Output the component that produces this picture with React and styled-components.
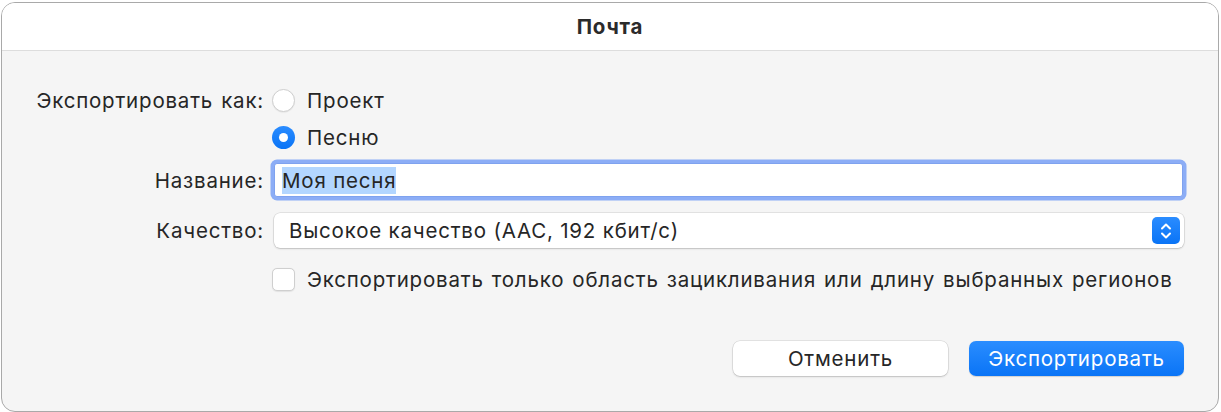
import React from 'react';
import styled, { createGlobalStyle } from 'styled-components';

const GlobalStyle = createGlobalStyle`
  html, body {
    margin: 0;
    padding: 0;
    background: #ffffff;
  }
  body {
    font-family: Inter, "Liberation Sans", Arial, sans-serif;
    color: #262626;
    letter-spacing: 0.8px;
    word-spacing: 1.5px;
  }
`;

const Window = styled.div`
  box-sizing: border-box;
  width: 1218px;
  height: 410px;
  margin: 2px 0 0 1px;
  border: 1px solid #a9a9a9;
  border-radius: 14px;
  background: #f5f5f5;
  overflow: hidden;
  display: flex;
  flex-direction: column;
`;

const TitleBar = styled.div`
  height: 47px;
  flex: none;
  background: #ffffff;
  border-bottom: 1px solid #dddddd;
  display: flex;
  align-items: center;
  justify-content: center;
  font-size: 20.5px;
  font-weight: 700;
  color: #2b2b2b;
`;

const Body = styled.div`
  flex: 1;
  display: flex;
  flex-direction: column;
  padding: 34px 34px 0 0;
`;

const Form = styled.div`
  display: grid;
  grid-template-columns: 262px 1fr;
  column-gap: 8px;
  grid-template-rows: 30px 30px 42px 45px 38px;
  row-gap: 7px;
  align-items: center;
`;

const Label = styled.div`
  font-size: 20.5px;
  text-align: right;
  white-space: nowrap;
`;

const Option = styled.label`
  display: flex;
  align-items: center;
  gap: 12px;
  font-size: 20.5px;
  white-space: nowrap;
`;

const Radio = styled.span`
  box-sizing: border-box;
  width: 23px;
  height: 23px;
  border-radius: 50%;
  flex: none;
  display: flex;
  align-items: center;
  justify-content: center;
  background: ${p => (p.$checked ? 'linear-gradient(#2a8cff, #0a74f6)' : '#ffffff')};
  border: ${p => (p.$checked ? 'none' : '1px solid #cfcfcf')};
  box-shadow: ${p => (p.$checked ? 'none' : '0 0.5px 1px rgba(0,0,0,0.08)')};

  &::after {
    content: '';
    display: ${p => (p.$checked ? 'block' : 'none')};
    width: 9px;
    height: 9px;
    border-radius: 50%;
    background: #ffffff;
  }
`;

const Checkbox = styled.span`
  box-sizing: border-box;
  width: 23px;
  height: 23px;
  border-radius: 5px;
  flex: none;
  background: #ffffff;
  border: 1px solid #cfcfcf;
  box-shadow: 0 0.5px 1px rgba(0,0,0,0.08);
`;

const TextField = styled.div`
  box-sizing: border-box;
  height: 34px;
  margin: 0 1px 0 2px;
  background: #ffffff;
  border: 1px solid #7fa2ef;
  box-shadow: 0 0 0 3.5px #8cadf6;
  border-radius: 3px;
  display: flex;
  align-items: center;
  padding-left: 7px;
  font-size: 20.5px;
  word-spacing: 0;
`;

const Selection = styled.span`
  background: #b3d6ff;
  line-height: 27px;
`;

const Popup = styled.div`
  box-sizing: border-box;
  height: 35px;
  margin-left: 2px;
  background: #ffffff;
  border-radius: 6px;
  box-shadow: 0 0 0 0.5px rgba(0,0,0,0.14), 0 1px 2px rgba(0,0,0,0.16);
  display: flex;
  align-items: center;
  justify-content: space-between;
  padding: 0 4px 0 15px;
  font-size: 20.5px;
  word-spacing: 0;
`;

const Stepper = styled.span`
  width: 28px;
  height: 27px;
  border-radius: 5px;
  background: linear-gradient(#2a8cff, #0a74f6);
  display: flex;
  align-items: center;
  justify-content: center;
`;

const Buttons = styled.div`
  display: flex;
  justify-content: flex-end;
  gap: 21px;
  margin-top: 43px;
`;

const Button = styled.button`
  box-sizing: border-box;
  width: 215px;
  height: 35px;
  border: none;
  border-radius: 7px;
  font-family: inherit;
  letter-spacing: inherit;
  font-size: 20.5px;
  padding: 0;
  color: ${p => (p.$primary ? '#ffffff' : '#262626')};
  background: ${p => (p.$primary ? 'linear-gradient(#2a8dff, #0a74f6)' : '#ffffff')};
  box-shadow: ${p =>
    p.$primary
      ? '0 0.5px 1px rgba(0,0,0,0.15)'
      : '0 0 0 0.5px rgba(0,0,0,0.14), 0 1px 2px rgba(0,0,0,0.16)'};
`;

const StepperIcon = () => (
  <svg width="14" height="20" viewBox="0 0 14 20" fill="none">
    <path d="M3 7.5 L7 3.5 L11 7.5" stroke="#fff" strokeWidth="2" strokeLinecap="round" strokeLinejoin="round" />
    <path d="M3 12.5 L7 16.5 L11 12.5" stroke="#fff" strokeWidth="2" strokeLinecap="round" strokeLinejoin="round" />
  </svg>
);

export default function App() {
  return (
    <>
      <GlobalStyle />
      <Window>
        <TitleBar>Почта</TitleBar>
        <Body>
          <Form>
            <Label>Экспортировать как:</Label>
            <Option>
              <Radio />
              Проект
            </Option>

            <div />
            <Option>
              <Radio $checked />
              Песню
            </Option>

            <Label>Название:</Label>
            <TextField>
              <Selection>Моя песня</Selection>
            </TextField>

            <Label>Качество:</Label>
            <Popup>
              Высокое качество (AAC, 192 кбит/с)
              <Stepper>
                <StepperIcon />
              </Stepper>
            </Popup>

            <div />
            <Option>
              <Checkbox />
              Экспортировать только область зацикливания или длину выбранных регионов
            </Option>
          </Form>
          <Buttons>
            <Button>Отменить</Button>
            <Button $primary>Экспортировать</Button>
          </Buttons>
        </Body>
      </Window>
    </>
  );
}
